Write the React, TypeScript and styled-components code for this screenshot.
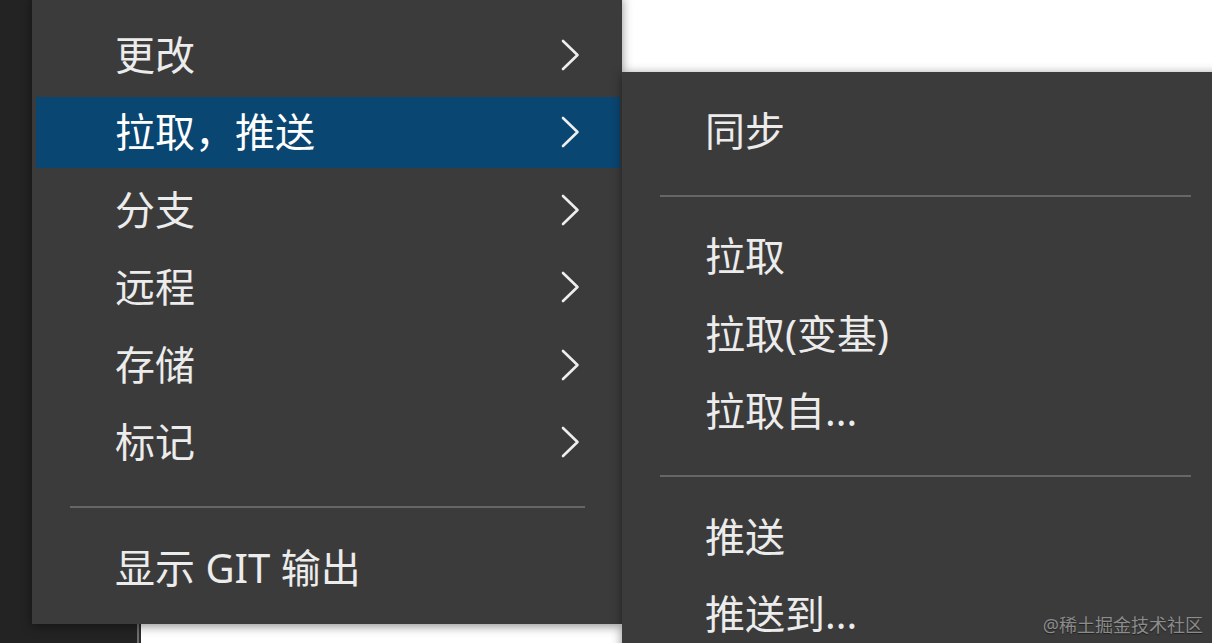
import React from 'react';
import styled, { createGlobalStyle } from 'styled-components';

const GlobalStyle = createGlobalStyle`
  html, body, #root {
    margin: 0;
    height: 100%;
    overflow: hidden;
  }
  body {
    font-family: "Noto Sans", "Noto Sans CJK SC", sans-serif;
  }
`;

const Workbench = styled.div`
  position: relative;
  display: flex;
  width: 100%;
  height: 100%;
  background: #ffffff;
`;

const SideBar = styled.div`
  width: 137px;
  flex-shrink: 0;
  background: #232323;
  border-right: 2px solid #6d6d6d;
  box-shadow: 2px 0 0 #2c2c2c;
`;

const Editor = styled.div`
  flex: 1;
  margin-left: 2px;
  background: #ffffff;
`;

/* menus float over the workbench */
const Menu = styled.div<{ $left: number; $top: number; $width: number }>`
  position: absolute;
  left: ${(p) => p.$left}px;
  top: ${(p) => p.$top}px;
  width: ${(p) => p.$width}px;
  box-sizing: border-box;
  padding: 20px 2px 17px 4px;
  background: #3b3b3b;
  box-shadow: 0 2px 10px rgba(0, 0, 0, 0.45);
  color: #ececec;
`;

const Item = styled.div`
  height: 77.5px;
  box-sizing: border-box;
  padding: 3px 0;
`;

const ItemInner = styled.div<{ $active?: boolean; $indent: number }>`
  height: 100%;
  display: flex;
  align-items: center;
  justify-content: space-between;
  padding-left: ${(p) => p.$indent}px;
  padding-right: 40px;
  background: ${(p) => (p.$active ? '#0a4672' : 'transparent')};
  color: ${(p) => (p.$active ? '#ffffff' : '#ececec')};
  font-size: 40px;
  line-height: 1;
  white-space: nowrap;
`;

const Separator = styled.div`
  height: 48px;
  box-sizing: border-box;
  padding: 25px 35px 0 34px;

  &::after {
    content: '';
    display: block;
    height: 2px;
    background: #666666;
  }
`;

const Watermark = styled.div`
  position: absolute;
  right: 9px;
  bottom: 6px;
  font-family: "Noto Sans", "Noto Sans CJK SC", sans-serif;
  font-size: 18px;
  color: #8c8c8c;
  text-shadow: 0 1px 1px rgba(0, 0, 0, 0.5);
`;

const Chevron = () => (
  <svg width="20" height="32" viewBox="0 0 20 32" fill="none">
    <polyline
      points="3,2 17.5,16 3,30"
      stroke="#eeeeee"
      strokeWidth="2.6"
      strokeLinecap="round"
      strokeLinejoin="round"
    />
  </svg>
);

type Entry = { label?: string; sub?: boolean; active?: boolean; sep?: boolean };

const mainItems: Entry[] = [
  { label: '更改', sub: true },
  { label: '拉取，推送', sub: true, active: true },
  { label: '分支', sub: true },
  { label: '远程', sub: true },
  { label: '存储', sub: true },
  { label: '标记', sub: true },
  { sep: true },
  { label: '显示 GIT 输出' },
];

const pullPushItems: Entry[] = [
  { label: '同步' },
  { sep: true },
  { label: '拉取' },
  { label: '拉取(变基)' },
  { label: '拉取自...' },
  { sep: true },
  { label: '推送' },
  { label: '推送到...' },
];

const MenuList: React.FC<{ items: Entry[]; indent: number }> = ({ items, indent }) => (
  <>
    {items.map((it, i) =>
      it.sep ? (
        <Separator key={i} />
      ) : (
        <Item key={i}>
          <ItemInner $active={it.active} $indent={indent}>
            <span>{it.label}</span>
            {it.sub && <Chevron />}
          </ItemInner>
        </Item>
      ),
    )}
  </>
);

const App: React.FC = () => {
  return (
    <>
      <GlobalStyle />
      <Workbench>
        <SideBar />
        <Editor />
        <Menu $left={32} $top={-4} $width={590}>
          <MenuList items={mainItems} indent={79} />
        </Menu>
        <Menu $left={622} $top={72} $width={606}>
          <MenuList items={pullPushItems} indent={79} />
        </Menu>
        <Watermark>@稀土掘金技术社区</Watermark>
      </Workbench>
    </>
  );
};

export default App;
